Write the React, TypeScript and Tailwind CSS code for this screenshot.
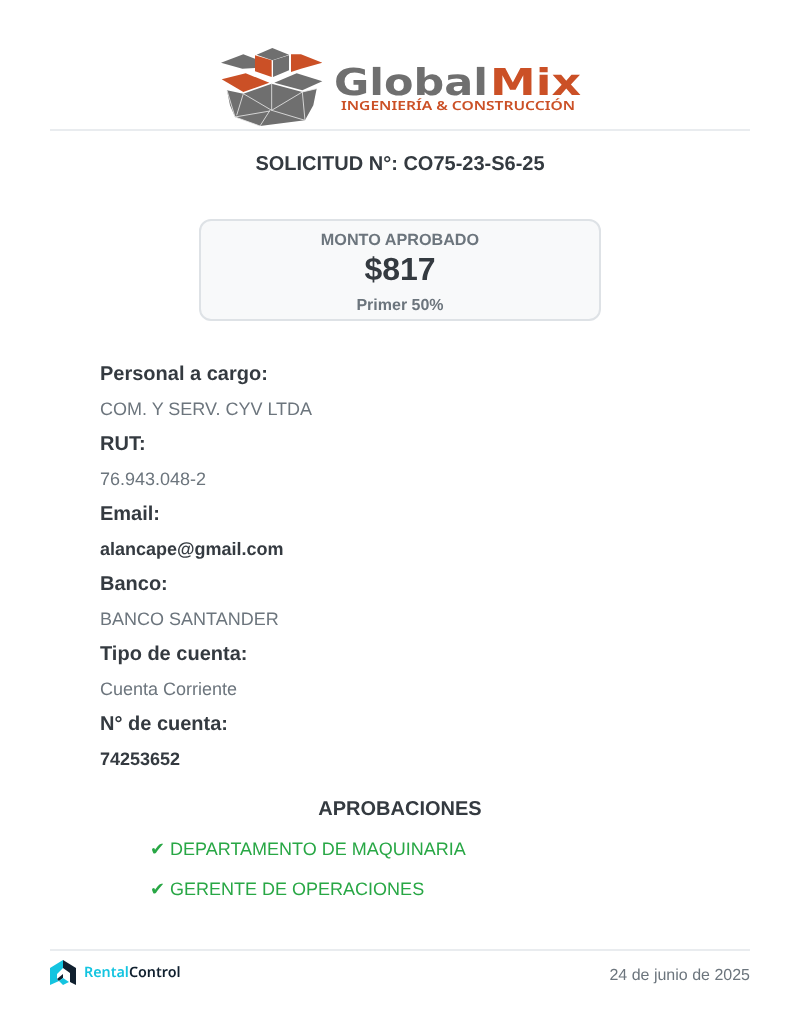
const FONT = "font-['Liberation_Sans',Arial,sans-serif]";

const rows = [
  { label: 'Personal a cargo:', value: 'COM. Y SERV. CYV LTDA' },
  { label: 'RUT:', value: '76.943.048-2' },
  { label: 'Email:', value: 'alancape@gmail.com', strong: true },
  { label: 'Banco:', value: 'BANCO SANTANDER' },
  { label: 'Tipo de cuenta:', value: 'Cuenta Corriente' },
  { label: 'N° de cuenta:', value: '74253652', strong: true },
];

function GlobalMixLogo() {
  return (
    <svg viewBox="215 44 370 85" className="block w-[370px] h-[85px]">
      <g transform="translate(215 42) scale(0.3333)">
        <polygon points="18,62 85,37 120,50 120,78 82,80" fill="#6f6f6f" />
        <polygon points="125,38 172,18 222,38 172,55" fill="#6f6f6f" />
        <polygon points="120,40 170,55 170,105 120,88" fill="#cb5026" />
        <polygon points="174,55 222,40 222,85 174,105" fill="#6f6f6f" />
        <polygon points="228,37 258,37 322,62 258,80 228,90" fill="#cb5026" />
        <polygon points="20,112 92,94 163,122 85,150" fill="#cb5026" />
        <polygon points="178,122 245,94 322,118 262,145" fill="#6f6f6f" />
        <polygon points="36,145 85,155 170,125 262,150 305,140 295,190 270,235 135,252 60,225 45,190" fill="#6f6f6f" />
        <path d="M170 125V205M36 145L60 225L135 252L165 205M85 155L65 220M85 155L170 205L270 235M262 150L170 205M262 150L270 235M305 140L262 150M60 225L165 207" fill="none" stroke="#e8e8e8" strokeWidth="2.5" />
      </g>
      <text x="334" y="95" fontFamily="'DejaVu Sans', sans-serif" fontWeight="700" fontSize="37" fill="#6f6f6f" textLength="154" lengthAdjust="spacingAndGlyphs">Global</text>
      <text x="490" y="95" fontFamily="'DejaVu Sans', sans-serif" fontWeight="700" fontSize="37" fill="#cb5026" textLength="91" lengthAdjust="spacingAndGlyphs">Mix</text>
      <text x="341" y="110" fontFamily="'Noto Sans', sans-serif" fontWeight="600" fontSize="12.5" fill="#cb5026" textLength="234" lengthAdjust="spacingAndGlyphs">INGENIERÍA &amp; CONSTRUCCIÓN</text>
    </svg>
  );
}

function RentalControlLogo() {
  return (
    <div className="mt-[9px] flex items-center gap-2">
      <svg viewBox="0 0 26 25" className="block w-[26px] h-[25px]">
        <polygon points="0,8 13,0 13,8 7,14 7,19 9,21 0,25" fill="#14c4e0" />
        <polygon points="13,0 26,8 26,25 20,22 20,13 13,8" fill="#10202f" />
        <polygon points="7,19 13,14 13,18 9,21" fill="#10202f" />
        <polygon points="9,21 13,18 19,22 13,25" fill="#14c4e0" />
      </svg>
      <span className="font-['Noto_Sans',sans-serif] text-[14.3px] font-semibold leading-5">
        <span className="text-[#14c4e0]">Rental</span>
        <span className="text-[#10202f]">Control</span>
      </span>
    </div>
  );
}

export default function App() {
  return (
    <div className={`${FONT} w-[800px] h-[1030px] bg-white px-[50px] pt-[44px] text-[#343a40] [text-rendering:geometricPrecision] will-change-transform`}>
      <header className="flex justify-center border-b-2 border-[#e9ecef]">
        <GlobalMixLogo />
      </header>

      <h1 className="mt-[21px] text-center text-[20px] font-bold leading-[24px]">SOLICITUD N°: CO75-23-S6-25</h1>

      <section className="mx-auto mt-[43px] flex h-[102px] w-[402px] flex-col items-center rounded-[12px] border-2 border-[#dee2e6] bg-[#f8f9fa] pt-[9px]">
        <div className="text-[16.2px] font-bold leading-[20px] text-[#6c757d]">MONTO APROBADO</div>
        <div className="-mt-px text-[32px] font-bold leading-[40px]">$817</div>
        <div className="mt-[7px] text-[16px] font-bold leading-[20px] text-[#6c757d]">Primer 50%</div>
      </section>

      <section className="mt-[40px] px-[50px]">
        {rows.map((row) => (
          <div key={row.label} className="pt-px pb-[10px]">
            <div className="mb-[11px] text-[20px] font-bold leading-[24px]">{row.label}</div>
            <div className={`text-[18px] leading-[24px] ${row.strong ? 'font-bold' : 'text-[#6c757d]'}`}>{row.value}</div>
          </div>
        ))}
      </section>

      <h2 className="mt-[16px] text-center text-[20px] font-bold leading-[24px]">APROBACIONES</h2>

      <ul className="mt-[16px] flex flex-col gap-[16px] pl-[100px] text-[18px] leading-[24px] text-[#28a745]">
        <li>✔ DEPARTAMENTO DE MAQUINARIA</li>
        <li>✔ GERENTE DE OPERACIONES</li>
      </ul>

      <footer className="mt-[48px] flex items-start justify-between border-t-2 border-[#e9ecef]">
        <RentalControlLogo />
        <span className="mt-[13px] text-[16px] leading-[24px] text-[#6c757d]">24 de junio de 2025</span>
      </footer>
    </div>
  );
}
